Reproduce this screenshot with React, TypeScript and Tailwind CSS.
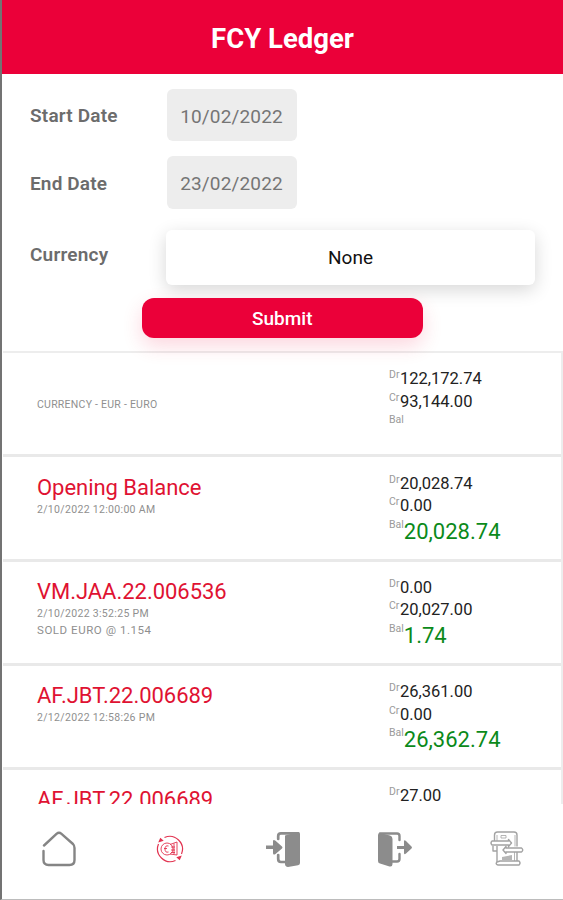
import React from "react";

interface Entry {
  title?: string;
  date?: string;
  note?: string;
  dr: string;
  cr?: string;
  bal?: string;
}

const entries: Entry[] = [
  { note: "CURRENCY - EUR - EURO", dr: "122,172.74", cr: "93,144.00", bal: "" },
  { title: "Opening Balance", date: "2/10/2022 12:00:00 AM", dr: "20,028.74", cr: "0.00", bal: "20,028.74" },
  { title: "VM.JAA.22.006536", date: "2/10/2022 3:52:25 PM", note: "SOLD EURO @ 1.154", dr: "0.00", cr: "20,027.00", bal: "1.74" },
  { title: "AF.JBT.22.006689", date: "2/12/2022 12:58:26 PM", dr: "26,361.00", cr: "0.00", bal: "26,362.74" },
  { title: "AF.JBT.22.006689", dr: "27.00" },
];

interface AmountProps {
  label: string;
  value?: string;
  big?: boolean;
}
const Amount: React.FC<AmountProps> = ({ label, value, big }) => {
  if (value === undefined) return null;
  return (
    <div className={big ? "flex h-[30px] items-start" : "flex h-[22.5px] items-start"}>
      <span className="text-[10.5px] leading-[14px] text-[#9a9a9a]">{label}</span>
      <span className={big ? "text-[22px] leading-[28px] text-[#0b8a1a]" : "pl-[0.5px] text-[16.5px] leading-[22px] text-[#222]"}>{value}</span>
    </div>
  );
};

const Row: React.FC<{ entry: Entry }> = ({ entry }) => {
  return (
    <div className="flex h-[104.25px] shrink-0 border-b-3 border-[#e9e9e9] pl-[34px]">
      <div className="w-[352px] pt-[16.4px]">
        <div className="h-[28px] text-[22px] leading-[28px] tracking-[-0.03px] text-[#df1232]">{entry.title}</div>
        {entry.date && <div className="text-[10.5px] leading-[16px] tracking-[0.32px] text-[#8f8f8f]">{entry.date}</div>}
        {entry.note && (
          <div className={entry.date ? "text-[11.5px] leading-[16px] tracking-[0.55px] text-[#8f8f8f]" : "text-[10.5px] leading-[16px] tracking-[0.25px] text-[#8f8f8f]"}>
            {entry.note}
          </div>
        )}
      </div>
      <div className="pt-[15.3px]">
        <Amount label="Dr" value={entry.dr} />
        <Amount label="Cr" value={entry.cr} />
        <Amount label="Bal" value={entry.bal} big />
      </div>
    </div>
  );
};

const HomeIcon = () => (
  <svg width="36" height="36" viewBox="0 0 36 36" fill="none" stroke="#858585" strokeWidth="2.4" strokeLinecap="round" strokeLinejoin="round">
    <path d="M3 14.5 15.5 2.9Q18 .8 20.5 2.9L32 13Q33.5 14.5 33.5 17V29Q33.5 34 28.5 34H7.5Q2.5 34 2.5 29V20" />
  </svg>
);

const ExchangeIcon = () => (
  <svg width="28" height="28" viewBox="0 0 28 28" fill="none" stroke="#e23350" strokeWidth="1.2">
    <path d="M8.5 2.5A12.8 12.8 0 0 1 25.5 19M19.500 25.500A12.800 12.800 0 0 1 2.500 9" />
    <path d="M3.300 6.500 4.500 3.800 6.500 5.500ZM24.700 21.500 23.500 24.200 21.500 22.500Z" fill="#e23350" />
    <circle cx="11" cy="14" r="6" strokeWidth=".9" />
    <path d="M12.5 11Q9 10 9 14T12.5 17M8 13.5H11M14 9.500 21 7V20L14 19M15 12H19M15 15H19M15 17.500H19M18 8.500V19" strokeWidth=".9" />
  </svg>
);

const LoginIcon = () => (
  <svg width="36" height="36" viewBox="0 0 36 36" fill="#8c8c8c">
    <path d="M20 4.5 33 1Q35 .8 35 3V32Q35 34 33 34.2L23 36Q20 35.5 20 33Z" />
    <path d="M33 2.3H16Q13.2 2.3 13.2 5V8M13.2 24V28Q13.2 31 16 31H22" fill="none" stroke="#8c8c8c" strokeWidth="2.7" strokeLinecap="round" />
    <path d="M1 14.5H8V10.500Q8 8 10.500 9.800L17 15.500Q18 16.500 17 17.500L10.500 23Q8 24.500 8 22V18H1Z" />
  </svg>
);

const LogoutIcon = () => (
  <svg width="36" height="36" viewBox="0 0 36 36" fill="#8c8c8c">
    <path d="M1 4Q1 2 3 2L13 4.5Q15.5 5.2 15.5 8V33Q15.5 36 12.5 35.4L3 32.5Q1 32 1 30Z" />
    <path d="M3 2.5H20Q22.5 2.5 22.5 5V9M22.5 23V28Q22.5 30.5 20 30.5H15" fill="none" stroke="#8c8c8c" strokeWidth="2.4" strokeLinecap="round" />
    <path d="M20 15H27V10.5Q27 8.5 29 10L34.5 15.5Q35.5 16.5 34.5 17.5L29 22.5Q27 24 27 22V18H20Z" />
  </svg>
);

const ReportIcon = () => (
  <svg width="34" height="36" viewBox="0 0 34 36" fill="none" stroke="#a3a3a3" strokeWidth="1.4" strokeLinejoin="round">
    <path d="M4.5 10V4Q4.5 1 7.5 1H24Q27 1 27 4V15.5M3 15V20H7M7 15V31M27 21V30" />
    <path d="M7 4V10M25 4V15.500M24.500 21V30" strokeWidth=".8" />
    <path d="M18.5 10H2Q0 12 2 14H18.5V15.5L21.5 12 18.5 8.5ZM16 17H31.5Q34 19 31.5 21H16V22.5L13 19 16 15.5Z" />
    <path d="M10 30H29Q31 32 29 34H8Q5 33 7 31Z" />
    <path d="M12 29V26L22 24V29Z" fill="#b5b5b5" stroke="none" />
    <path d="M11 4.5H16V7H11Z" strokeWidth=".8" />
  </svg>
);

export default function App() {
  return (
    <div className="flex h-[900px] w-[563px] flex-col overflow-hidden border-b border-l-2 border-b-[#bcbcbc] border-l-[#737373] bg-white font-[Roboto,sans-serif]">
      <header className="flex h-[74px] shrink-0 items-center justify-center bg-[#eb0039] pt-[3px] text-[27.5px] font-bold text-white">
        FCY Ledger
      </header>

      <div className="h-[277px] shrink-0 pt-[15px] pl-7 text-[19px]">
        <div className="flex h-[52px] items-center">
          <div className="w-[136.5px] pt-[3px] text-[19px] font-semibold tracking-[0.2px] text-[#6c6c6c]">Start Date</div>
          <div className="flex h-full w-[130px] items-center justify-center rounded-md bg-[#ededed] pt-1 tracking-[0.15px] text-[#757575]">10/02/2022</div>
        </div>
        <div className="mt-[15px] flex h-[53px] items-center">
          <div className="w-[136.5px] pt-[3px] text-[19px] font-semibold tracking-[0.15px] text-[#6c6c6c]">End Date</div>
          <div className="flex h-full w-[130px] items-center justify-center rounded-md bg-[#ededed] pt-[3px] tracking-[0.15px] text-[#757575]">23/02/2022</div>
        </div>
        <div className="mt-[21px] flex h-[55px] items-center">
          <div className="w-[136px] pb-1 text-[19px] font-semibold tracking-[0.2px] text-[#6c6c6c]">Currency</div>
          <div className="flex h-full w-[369px] items-center justify-center rounded-md bg-white pt-[2px] text-[#111] shadow-[0_5px_18px_rgba(0,0,0,0.16)]">None</div>
        </div>
        <button className="relative mt-[13px] ml-[112px] flex h-10 w-[280.5px] items-center justify-center rounded-xl bg-[#eb0039] pt-[3px] text-[19px] font-medium text-white shadow-[0_8px_20px_rgba(235,0,57,0.16)]">
          Submit
        </button>
      </div>

      <div className="ml-px flex h-[453px] shrink-0 flex-col overflow-hidden border-t-2 border-r-2 border-[#ededed]">
        {entries.map((entry, i) => (
          <Row key={i} entry={entry} />
        ))}
      </div>

      <nav className="flex flex-1 items-start bg-white pt-[26.5px]">
        <div className="ml-[38.5px] w-[115.5px]"><HomeIcon /></div>
        <div className="w-[109px] pt-1"><ExchangeIcon /></div>
        <div className="w-[111.5px]"><LoginIcon /></div>
        <div className="w-[113.5px]"><LogoutIcon /></div>
        <ReportIcon />
      </nav>
    </div>
  );
}
